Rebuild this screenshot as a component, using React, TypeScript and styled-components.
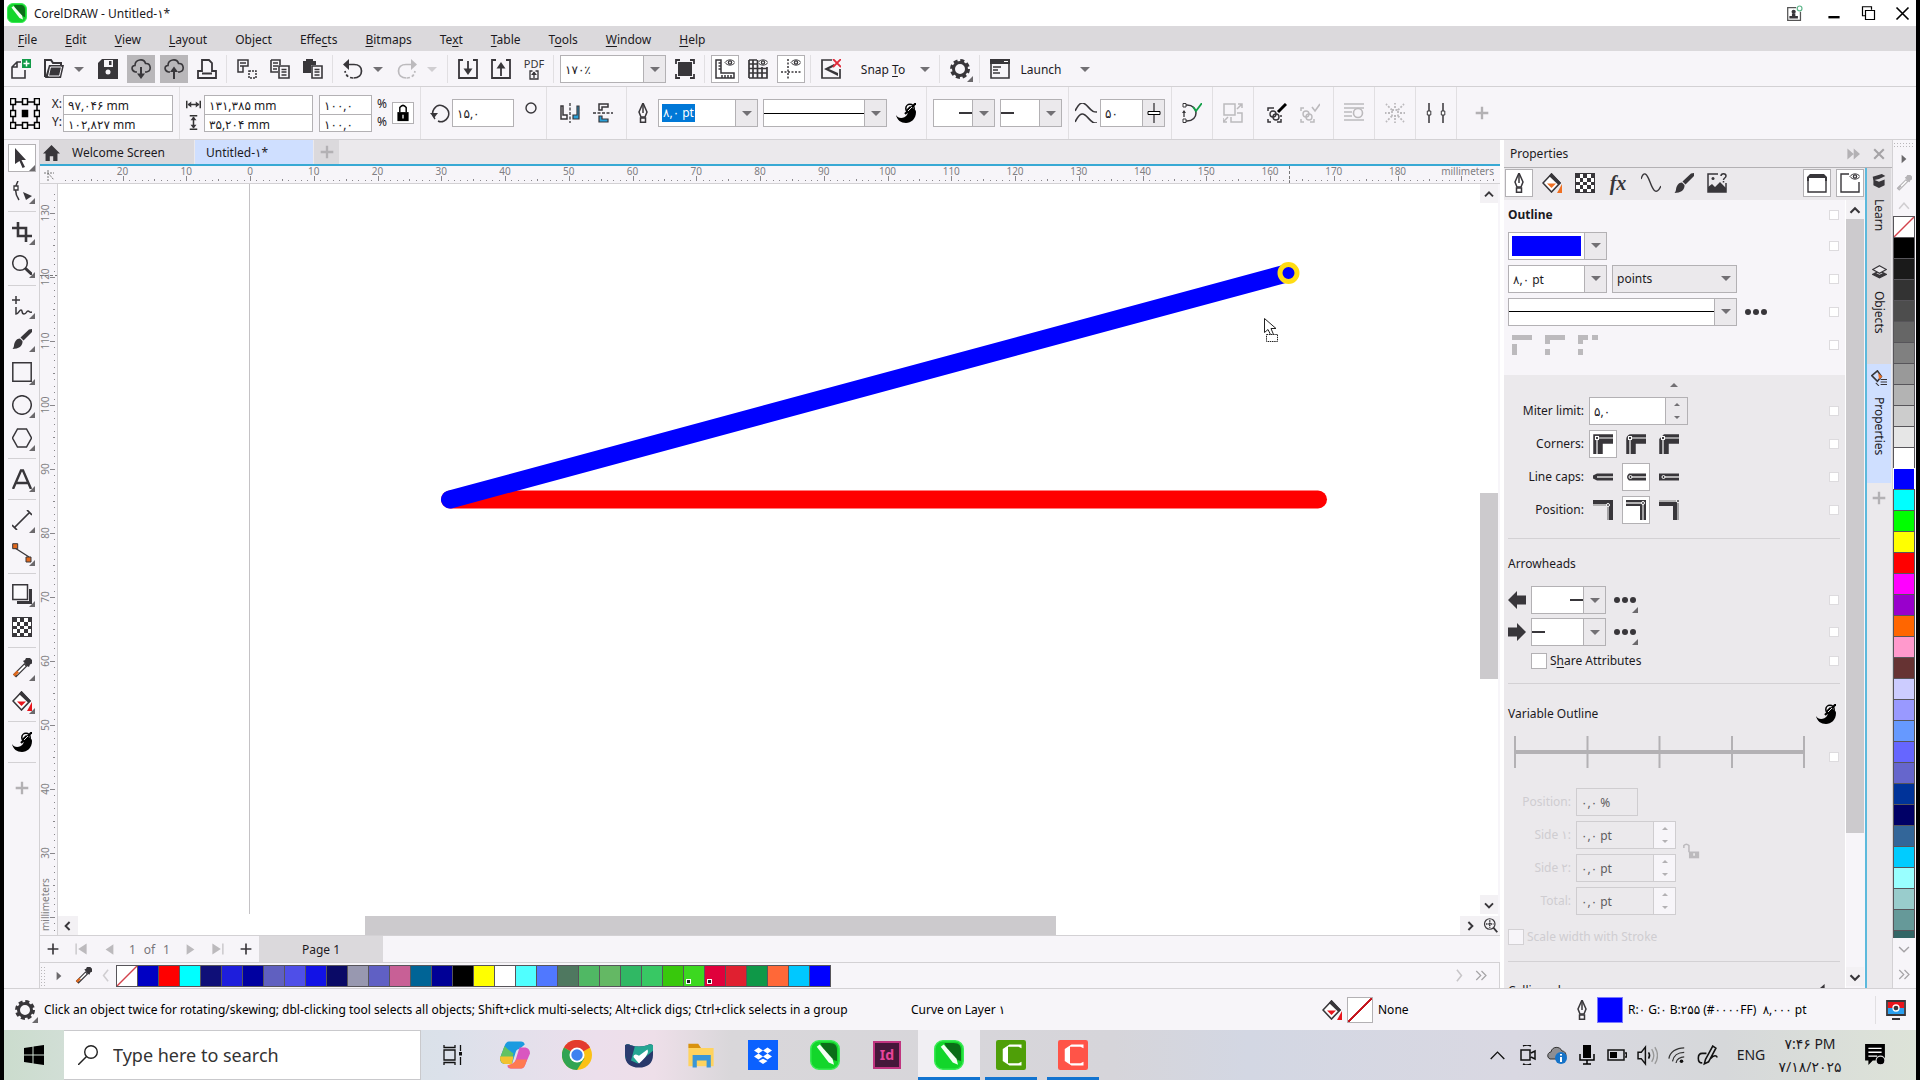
import React from "react";
import styled, { createGlobalStyle, css } from "styled-components";

const INK = "#38363a";
const LINE = "#d3d1d4";
const EDGE = "#b3b1b4";
const BAR = "#f7f5f9";
const PANE = "#ebe9ec";
const DIM = "#dbd9dc";
const ACTIVE = "#cfdfff";
const FADE = "#bcbabd";
const FONT = `"Noto Sans", "DejaVu Sans", sans-serif`;

const Global = createGlobalStyle`
  *, *::before, *::after { box-sizing: border-box; }
  body { margin: 0; background: #000; font: 12px/16px ${FONT}; color: #1c1a1e; }
  button, input, select { font: inherit; color: inherit; margin: 0; border-radius: 0; }
  button { padding: 0; border: 0; background: none; }
  svg { display: block; flex: none; }
`;

/* ---------- icons ---------- */

type Drawing = React.ReactNode;

const swirl = (
  <g>
    <path d="M0 12c2 4 8 4 11 0 1-2 1-4-1-5l4-4c3 3 6 3 6 6 0 7-5 11-10 11S1 17 0 12z" fill="#000" />
    <path d="M9 11 20 0" stroke="#000" strokeWidth="2.2" />
    <circle cx="14" cy="5.5" r="4.2" fill="none" stroke="#000" strokeWidth="1.5" />
    <path d="M12 8l4-4" stroke="#fff" strokeWidth=".9" />
    <path d="M11.500 4.500a3 3 0 0 1 2-1.800" stroke="#fff" strokeWidth=".9" fill="none" />
  </g>
);
const checker = (
  <g>
    <path d="M0 0h20v20H0z" fill={INK} />
    <path
      fill="#fff"
      d="M5 1h3v4H5zM12 1h4v4h-4zM1 5h4v4H1zM8 5h4v4H8zM16 5h3v4h-3zM5 9h3v3H5zM12 9h4v3h-4zM1 12h4v4H1zM8 12h4v4H8zM16 12h3v4h-3zM5 16h3v3H5zM12 16h4v3h-4z"
    />
  </g>
);
const bucket = (drop: string) => (
  <g>
    <path d="M9.5 1 1 10l8.5 9L18 10z" fill="#fff" stroke={INK} strokeWidth="1.6" />
    <path d="M9.5 0 19 10l-2.500 2L7 3z" fill={INK} />
    <path d="M5 10.500h9l-4.500 4.500z" fill={drop} />
    <path d="M20 11v9h-5z" fill={drop} />
  </g>
);
const nib = (
  <g fill="none" stroke={INK} strokeWidth="1.5">
    <path d="M10 0 6 9l2 5h4l2-5z" />
    <path d="M10 2v8" />
    <path d="M7.500 15h5v4.300h-5z" />
  </g>
);
const brush = (
  <path d="M20 0v3L11.500 11.500 8.500 8.500 17 .5zM8 9.500 10.500 12c.5 5-4 8-10 8 2-2 1-4 2.500-7 1-2.500 3-3.500 5-3.500z" fill={INK} />
);
const gear = (
  <g>
    <circle cx="10" cy="10" r="8.300" fill="none" stroke={INK} strokeWidth="3.400" strokeDasharray="3.900 2.619" />
    <circle cx="10" cy="10" r="6.500" fill="none" stroke={INK} strokeWidth="3" />
  </g>
);
const dropper = (stem: string, tip: string) => (
  <g>
    <path d="M14 6.500 2.500 18" stroke={stem} strokeWidth="4.500" />
    <path d="M13 7.500 4 16.500" stroke="#fff" strokeWidth="1.800" />
    <path d="M6 13.500 2 17.500" stroke={tip} strokeWidth="2.600" />
    <path d="M11 3l2-1 1-2h4l2 2v3.500l-2 1-1 2.500-2-1z" fill={stem} />
  </g>
);
const eye = (
  <g transform="translate(10 0)" fill="none" stroke={INK}>
    <path d="M0 3.500C2.500 0 7.500 0 10 3.500 7.500 7 2.500 7 0 3.500z" fill="#fff" />
    <circle cx="5" cy="3.500" r="1.600" strokeWidth="1.400" />
  </g>
);
const corel = (
  <g>
    <rect x=".5" y=".5" width="19" height="19" rx="5.500" fill="#13d62b" stroke="#3aea55" />
    <path d="M7 2h6c4 0 5 2 5 5v7c-5-1-9-6-11-12z" fill="#0b6d18" />
    <path d="M4.500 4.500 6.500 3l8.500 9.500 1 4-3.500-1.500z" fill="#f3fff3" />
  </g>
);
const lineCorner = (kind: "miter" | "round" | "bevel") => (
  <g fill="none" strokeLinejoin={kind}>
    <path d="M5 20V5H20" stroke={INK} strokeWidth="9.500" />
    <path d="M4 20V4H20" stroke="#fff" strokeWidth="1.200" />
    <rect x="2.500" y="2.500" width="3" height="3" fill={INK} stroke="#fff" strokeWidth="1.100" />
  </g>
);
const linePos = (o: number) => (
  <g fill="none">
    <path d="M0 3h17v17" stroke={INK} strokeWidth="6" strokeLinejoin={o > 4 ? "round" : "miter"} />
    <path d={`M0 ${6 - o}h${14 + o}v${14 + o}`} stroke="#ddd" strokeWidth="1.300" />
    <circle cx={14 + o} cy={6 - o} r="1.500" fill={INK} stroke="#fff" />
  </g>
);
const cap = (kind: number) => (
  <g>
    <path
      d={kind === 0 ? "M4 6.500h16v7H4L0 11.500v-3z" : kind === 1 ? "M3 6.500h17v7H3Q-1 10 3 6.500z" : "M0 6.500h20v7H0z"}
      fill={INK}
    />
    <path d="M4 10h16" stroke="#ddd" strokeWidth="1.500" />
    {kind > 0 && <circle cx="4.500" cy="10" r="1.500" fill={INK} stroke="#fff" />}
  </g>
);
const S = (d: string, color = INK, w = 1.6) => <path d={d} fill="none" stroke={color} strokeWidth={w} />;
const F = (d: string, color = INK) => <path d={d} fill={color} />;

const cloud = "M6 13H4.500C0 12 0 6.500 4 6.500 4 0 13-1 14.500 4.500 20 4 21 12 15.500 13H14";

const icons: Record<string, Drawing> = {
  corel,
  newDoc: <>{S("M10 3H6L1 8v11h13v-8M6 3v5H1")}<path d="M11 0h9v9h-9z" fill="#129a48" />{S("M15.500 1.500v6M12.500 4.500h6", "#fff", 1.5)}</>,
  open: <>{S("M1 18V1h6l2 3h8v3", INK, 2)}{F("M5 6h15l-3 13H1z")}{S("M6.500 8h11l-2 9h-11z", "#f7f5f9", 1)}</>,
  save: <>{F("M4 0h16v20H0V4z")}<path d="M6 1h9v7H6z" fill="#f7f5f9" />{F("M11 2h2.500v4H11z")}<circle cx="10" cy="13" r="2.500" fill="#f7f5f9" /></>,
  cloudDown: <>{S(cloud)}{S("M10 8v10", INK, 2)}{F("M6 14.500h8L10 20z")}</>,
  cloudUp: <>{S(cloud)}{S("M10 10v10", INK, 2)}{F("M6 13h8l-4-5.500z")}</>,
  print: <>{S("M5 13V1h7l3 3v9M5 12H1v7h18v-7h-4M5 14.500h10", INK, 1.8)}</>,
  cut: <>{S("M1 1h10v6H6v6H1zM3 4h6M3 7h3", INK, 1.5)}<path d="M12 12h7v7h-7z" fill="none" stroke={INK} strokeWidth="1.500" strokeDasharray="2 1" /></>,
  copy: <>{S("M1 1h9v5M1 1v12h7M3 4h5M3 7h5M3 10h4", INK, 1.6)}{S("M9 7h10v12H9zM11.500 10.500h5M11.500 13h5M11.500 16h5", INK, 1.6)}</>,
  paste: <>{F("M0 2h3V0h7v2h3v4H8v8H0z")}{S("M9 7h10v12H9zM11.500 10.500h5M11.500 13h5M11.500 16h5", INK, 1.6)}</>,
  undo: <>{S("M3 5.500h8c5 0 7.500 3 7.500 6.500S16 19 10.500 19", INK, 1.7)}<path d="M10 19c-4 0-7-2-8-7" fill="none" stroke={INK} strokeWidth="1.700" strokeDasharray="3 2" />{F("M0 5.500 6 0v11z")}</>,
  redo: <>{S("M17 5.500H9c-5 0-7.500 3-7.500 6.500S4 19 9.500 19", FADE, 1.7)}<path d="M10 19c4 0 7-2 8-7" fill="none" stroke={FADE} strokeWidth="1.700" strokeDasharray="3 2" />{F("M20 5.500 14 0v11z", FADE)}</>,
  importDoc: <>{S("M5 1H1v18h18V1h-4M10 2v10", INK, 1.8)}{F("M5.500 9.500h9L10 16z")}</>,
  exportDoc: <>{S("M5 1H1v18h18V1h-4M10 8v9", INK, 1.8)}{F("M5.500 9.500h9L10 3z")}</>,
  pdf: <>{S("M7 2H2v16h16V2h-5M10 4v12", INK, 2.6)}{F("M4 10 10 3l6 7z")}</>,
  full: <>{F("M3 3h14v14H3z")}{S("M1 5V1h4M15 1h4v4M19 15v4h-4M5 19H1v-4", INK, 1.8)}</>,
  rulers: <>{S("M1 1h5v13h13v5H1zM3.500 4H6M3.500 7H6M3.500 10H6M7 19v-3M10 19v-3M13 19v-3M16 19v-3", INK, 1.5)}{eye}</>,
  grid: <>{S("M1 1h8M1 19h18V8M1 1v18M1 5h8M1 9.500h18M1 14h18M5 1v18M9.500 1v18M14 8v11", INK, 1.7)}{eye}</>,
  guides: <><path d="M7 0v20M0 13h20" stroke={INK} strokeWidth="1.500" strokeDasharray="2 1.500" />{eye}</>,
  snapOff: <>{S("M11 1H1v18h18v-9", INK, 1.7)}{F("M3 10 13 5v2.500L8 10l9 4v3z")}{S("M12 0l8 8M20 0l-8 8", "#e02a3a", 1.8)}</>,
  gear,
  launch: <>{S("M1 1h18v18H1z", INK, 1.6)}{F("M0 0h20v5H0z")}{S("M3 8h8M3 11h5M3 14h7", INK, 1.4)}{S("M14 2.500h4", "#fff", 1)}</>,
  mirrorH: <>{S("M1 3h2v9h4v4H1z", INK, 1.5)}<path d="M10 0v20" stroke={INK} strokeWidth="1.300" strokeDasharray="3 1.500" /><path d="M19 3h-2v9h-4v4h6z" fill="#2aa0d8" stroke={INK} strokeWidth="1.200" /></>,
  mirrorV: <>{S("M6 1h9v3H9v3H6z", INK, 1.5)}<path d="M0 10h20" stroke={INK} strokeWidth="1.300" strokeDasharray="3 1.500" /><path d="M6 19h9v-3H9v-3H6z" fill="#2aa0d8" stroke={INK} strokeWidth="1.200" /></>,
  nib,
  swirl,
  smooth: <>{S("M0 8C5-3 8-1 12 4s5 5 8 5M0 19C5 8 8 10 12 15s5 5 8 5", INK, 1.6)}</>,
  slider: <>{S("M10 0v20", INK, 1.3)}<path d="M4 8.500h12v3H4z" fill="#fff" stroke="#000" /></>,
  close: <>{S("M3 2h2c12 0 12 16 0 16H3", INK, 1.5)}<path d="M1 .5h3v3.500H1zM1 16h3v3.500H1z" fill="#fff" stroke={INK} />{S("M2 8v6", INK, 1.3)}{F("M0 10l2-3 2 3z")}{S("M11 4l3 4 6-8", "#12a048", 1.8)}</>,
  order: <>{S("M1 1h11v11H1zM8 14v5h11v-9h-5M14 6l5-5M15 1h4v4M5 14l-5 5M0 15v4h4", FADE, 1.5)}</>,
  bound: <>{S("M1 8V5h3M1 16v3h3M10 19h4v-3", INK, 1.5)}<circle cx="6" cy="11" r="3" fill="none" stroke={INK} strokeWidth="1.400" /><circle cx="9" cy="14" r="3" fill="none" stroke={INK} strokeWidth="1.400" />{S("M11 9 19 1", "#000", 3)}{S("M4 5h3M14 12v2", INK, 1.5)}</>,
  boundOff: <>{S("M1 8V5h3M1 16v3h3M10 19h4v-3", FADE, 1.5)}<circle cx="6" cy="11" r="3" fill="none" stroke={FADE} strokeWidth="1.400" /><circle cx="9" cy="14" r="3" fill="none" stroke={FADE} strokeWidth="1.400" />{S("M12 4l3 4 5-7", FADE, 1.6)}</>,
  wrap: <>{S("M0 1h20M0 5h20M0 9h8M0 13h8M0 17h20", FADE, 1.6)}<circle cx="14" cy="10" r="4.500" fill="#f7f5f9" stroke={FADE} strokeWidth="1.600" /></>,
  burst: <path d="M7 7 1 1M13 7l6-6M7 13l-6 6M13 13l6 6M5 10H0M15 10h5M10 5V0M10 15v5M7 7h6v6H7z" stroke={FADE} strokeWidth="1.800" strokeDasharray="2 1.500" fill="none" />,
  align: <>{S("M3 0v20M17 0v20", INK, 1.5)}<path d="M1.300 8h3.500v4H1.300zM15.300 8h3.500v4h-3.500z" fill="#fff" stroke={INK} /></>,
  plus: S("M10 3v14M3 10h14", "#b3b1b4", 2.6),
  plusSmall: S("M10 4v12M4 10h12", INK, 1.8),
  pick: F("M3 0l11 12H9.500l3.500 7-2.500 1-3-7L3 16z"),
  shape: <>{S("M6 0C2 7 3 13 7 19", INK, 1.5)}<path d="M2 5h4v4H2z" fill="#fff" stroke={INK} strokeWidth="1.300" />{F("M11 11l9 4-6 4z")}</>,
  crop: S("M6 0v14h14M0 6h14v14", INK, 2.6),
  zoom: <><circle cx="8" cy="8" r="7.300" fill="none" stroke={INK} strokeWidth="1.500" />{S("M13 13l7 6.500", INK, 3)}</>,
  freehand: S("M0 4h8M4 0v8M4 11v7c3 0 3-4 5-4s0 4 3 4 2-3 4-3 1 2 4 1", INK, 1.5),
  brush,
  rect: S("M.8.8h18.400v18.400H.8z", INK, 1.5),
  ellipse: <circle cx="10" cy="10" r="9.300" fill="none" stroke={INK} strokeWidth="1.500" />,
  polygon: S("M5.500 1h9L19.500 10l-5 9h-9L.5 10z", INK, 1.5),
  text: <>{S("M1 20 9 1.500h2L19 20M4 14h12", INK, 2.4)}</>,
  dimension: S("M3 17 17 3M0 15l5 5M15 0l5 5", INK, 1.7),
  connector: <>{S("M3 5l14 9", INK, 1.4)}<path d="M.7.7h5v5h-5zM14 14h5v5h-5z" fill="#e0681c" stroke={INK} /></>,
  shadow: <>{F("M17 5h3v15H5v-3h12z")}<path d="M.8.8h14.700v14.700H.8z" fill="#fbfafc" stroke={INK} strokeWidth="1.500" /></>,
  checker,
  dropper: dropper(INK, "#e0681c"),
  dropperOff: dropper("#b5b3b6", "#b5b3b6"),
  fill: bucket("#e8141c"),
  fillOrange: bucket("#f07023"),
  home: F("M10 0 0 10.500h3V20h5v-6h4v6h5v-9.500h3z"),
  wave: S("M0 6C3-3 6 1 9 9s6 14 11 4", INK, 1.4),
  picture: <>{S("M11 1H1v18h18V10", INK, 1.5)}{F("M1 19v-5l4-3 3 3 5-5 6 6v4z")}<circle cx="6" cy="5.500" r="1.500" fill={INK} />{S("M14 3c0-3 5-3 5 0 0 2-2.500 2-2.500 4M16.500 8v1.500", INK, 1.5)}</>,
  tabTop: <>{S("M1 5v14h18V5", INK, 1.4)}{F("M0 4l3-3h14l3 3v4h-2V5H2v3H0z")}</>,
  tabEye: <>{S("M9 1H1v18h18V9", INK, 1.4)}{eye}</>,
  learn: <>{F("M2 8l8 3 8-3v8l-8 4-8-4z")}{F("M1 4 14 0l5 3-9 4-8 2z")}</>,
  layers: <>{S("M10 8l9 4.500-9 4.500-9-4.500z", INK, 1.5)}{F("M4 10l6 3 6-3 2 3-8 4-8-4z")}<path d="M10 1l9 5-9 5-9-5z" fill="#ebe9ec" stroke={INK} strokeWidth="1.500" /></>,
  props: <>{S("M8 1 1 7l7 7 5-6z", INK, 2)}{F("M9 4l5 4-4 4z", "#f07023")}{S("M12 12h8M12 15h8M12 18h8M6 16l4 4", INK, 1.3)}</>,
  lock: <><rect x="3" y="9" width="14" height="10" fill="#000" />{S("M6 9V4q4-5 8 0v5", "#000", 1.8)}{S("M10 12v4", "#fff", 1.6)}</>,
  unlock: <><rect x="7" y="10" width="12" height="8" fill={FADE} />{S("M1 6V3q3-3 6 0v8", FADE, 1.8)}{S("M13 12v3", "#fff", 1.4)}</>,
  rotate: <>{S("M5 16C-1 9 6 0 13 3s8 11 1 15c-2 1-4 1-6 0", INK, 1.5)}{F("M0 10h8l-4 5z")}</>,
  widthIcon: <>{S("M1 5v10M19 5v10M3 10h14", "#333", 2)}{F("M2 10l5-4v8zM18 10l-5-4v8z")}</>,
  heightIcon: <>{S("M5 1h10M5 19h10M10 3v14", "#333", 2)}{F("M10 2l4 5H6zM10 18l4-5H6z")}</>,
  arrowL: F("M0 10 10 0v5h10v10H10v5z"),
  arrowR: F("M20 10 10 0v5H0v10h10v5z"),
  dash1: <>{F("M0 0h20v5H0zM0 9h5v11H0z", FADE)}</>,
  dash2: <>{F("M0 0h20v5H5v4H0zM0 14h5v6H0z", FADE)}</>,
  dash3: <>{F("M0 0h10v5H5v4H0zM14 0h6v5h-6zM0 14h5v6H0z", FADE)}</>,
  miter: lineCorner("miter"),
  round: lineCorner("round"),
  bevel: lineCorner("bevel"),
  cap0: cap(0),
  cap1: cap(1),
  cap2: cap(2),
  pos0: linePos(1),
  pos1: linePos(3),
  pos2: linePos(5),
  user: <>{S("M12 3H2v15h15V8", "#555", 1.5)}<circle cx="9" cy="8" r="2.500" fill={INK} />{F("M7 10h4v3h3v3H4v-3h3z")}<circle cx="16" cy="4" r="2.800" fill="none" stroke="#5fb68b" strokeWidth="1.400" /></>,
  min: S("M2 16h16", "#000", 3.4),
  restore: S("M6 13H2V1h12v4M6 6h12v12H6z", "#000", 1.6),
  x: S("M2 2l16 16M18 2 2 18", "#000", 2.2),
  xGray: S("M4 4l12 12M16 4 4 16", "#a5a3a6", 2.6),
  dbl: F("M2 2l9 8-9 8zM11 2l9 8-9 8z", "#b3b1b4"),
  chevUp: S("M5 13l5-5 5 5", INK, 2.4),
  chevDown: S("M5 8l5 5 5-5", INK, 2.4),
  chevLeft: S("M12 5l-5 5 5 5", INK, 2.4),
  chevRight: S("M8 5l5 5-5 5", INK, 2.4),
  chevUpG: S("M3 14l7-8 7 8", "#d0ced1", 2.2),
  chevDownG: S("M3 7l7 7 7-7", "#a5a3a6", 2),
  chevLeftG: S("M14 1 7 10l7 9", "#d0ced1", 2.4),
  chevRightG: S("M6 1l7 9-7 9", "#c8c6c9", 2.4),
  dblChev: S("M3 4l6 6-6 6M10 4l6 6-6 6", "#a5a3a6", 1.6),
  tri: F("M6 3l8 7-8 7z", "#6b696c"),
  first: <>{F("M18 2v16L6 10z", FADE)}{S("M3 2v16", FADE, 1.6)}</>,
  prev: F("M16 2v16L4 10z", FADE),
  next: F("M4 2v16l12-8z", FADE),
  last: <>{F("M2 2v16l12-8z", FADE)}{S("M17 2v16", FADE, 1.6)}</>,
  zoomPan: <><circle cx="9" cy="8" r="7" fill="none" stroke={INK} strokeWidth="1.600" />{S("M14 13l5 6", INK, 2.6)}<path d="M9 3v10M4 8h10" stroke={INK} strokeWidth="2" strokeDasharray="2 1" /></>,
  undoSmall: <>{S("M4 7h6c5 0 8 4 8 10", INK, 2.4)}{F("M0 7l8-7v14z")}</>,
  monitor: <>{S("M1 1h18v14H1zM6 19h8", INK, 1.8)}<path d="M2 2h16v6H2z" fill="#e8141c" /><path d="M2 8h16v6H2z" fill="#2aa0f0" /><circle cx="10" cy="8" r="3" fill={INK} stroke="#fff" strokeWidth="1.300" /></>,
  windows: F("M0 3l8.500-1.200v7.700H0zM9.500 1.600 20 0v9.500H9.500zM0 10.500h8.500v7.700L0 17zM9.500 10.500H20V20L9.500 18.400z", "#000"),
  search: <><circle cx="13" cy="7" r="6.300" fill="none" stroke="#222" strokeWidth="1.400" />{S("M8.500 11.500 0 20", "#222", 1.500)}</>,
  task: <>{S("M1 5h11v10H1zM1 0v2.500h11V0M1 20v-2.500h11V20M17.500 0v6M17.500 12v8", "#111", 1.300)}{F("M16 7h3v3.500h-3z", "#111")}</>,
  copilot: (
    <g>
      <path d="M6 1h8q2 0 2.500 2L13 6q-2 0-2.500 2L8 16H3q-3-.5-3-4L3 4q1-3 3-3z" fill="#1b9be0" />
      <path d="M0 12 3 4q4 4 6 5l-2 7H3q-3-.5-3-4z" fill="#62c262" />
      <path d="M0 11h9l-1 5H3q-3-.5-3-5z" fill="#f2c230" />
      <path d="M14 19H7q-2 0-2-2l3-1q2-1 2.500-3L13 5h4q3 .5 3 4l-3 7q-1 3-3 3z" fill="#d957c0" />
      <path d="M14 19H7l-2-2 3-1q2-1 3-3h7l-1 3q-1 3-3 3z" fill="#ff7a50" />
    </g>
  ),
  chrome: (
    <g>
      <circle cx="10" cy="10" r="10" fill="#fbc116" />
      <path d="M10 10 1.300 5A10 10 0 0 1 18.700 5z" fill="#e33b2e" />
      <path d="M10 10 1.300 5A10 10 0 0 0 10 20l5-8z" fill="#30a452" />
      <circle cx="10" cy="10" r="5" fill="#fff" />
      <circle cx="10" cy="10" r="3.800" fill="#3e82f0" />
    </g>
  ),
  shield: (
    <g>
      <path d="M0 3q2-1.500 4 0 6 2 12 0 2-1.500 4 0v7c0 6-4 9-10 9S0 16 0 10z" fill="#28396b" />
      <path d="M0 3q2-1.500 4 0 6 2 12 0 2-1.500 4 0v4L9 16 0 12z" fill="#25a693" />
      <path d="M0 3q2-1.500 4 0l3 1-3 11Q0 13 0 10z" fill="#2b3d70" />
      <path d="M10 16 6 11.500q0-3 4-1l6-4.500q2 3-6 10z" fill="#fff" />
    </g>
  ),
  folder: (
    <g>
      <path d="M1 2h7l2 3H1z" fill="#d9920e" />
      <path d="M1 5h18v13H1z" fill="#ffd35e" />
      <path d="M4 10h13v9h-3v-5H7v5H4z" fill="#3b96d6" />
    </g>
  ),
  dropbox: (
    <g>
      <path d="M0 0h20v20H0z" fill="#0b61ff" />
      <path d="M7 5l3 2-3 2-3-2zM13 5l3 2-3 2-3-2zM7 9l3 2-3 2-3-2zM13 9l3 2-3 2-3-2zM10 12.500l3 1.500-3 2-3-2z" fill="#fff" />
    </g>
  ),
  camGreen: (
    <g>
      <rect width="20" height="20" rx="1.500" fill="#4f9f08" />
      <path d="M17 5.500V3H9L4.500 6v8L9 17h8v-2.500l-2 1H8v-11h7z" fill="#fff" />
    </g>
  ),
  camRed: (
    <g>
      <rect width="20" height="20" rx="1.500" fill="#ff5448" />
      <path d="M17 5.500V3H9L4.500 6v8L9 17h8v-2.500l-2 1H8v-11h7z" fill="#fff" />
    </g>
  ),
  caret: S("M2 14l8-8 8 8", "#111", 1.600),
  cam: <>{S("M6 1q4-2 8 0M6 19q4 2 8 0M4 5h9v10H4zM14 8l4-2v8l-4-2", "#111", 1.500)}</>,
  cloudInfo: <><path d="M3 14C-1 12 1 7 4 7c1-6 9-6 11-1 4 0 5 5 3 8z" fill="#8e8e92" stroke="#333" /><circle cx="14" cy="13" r="6" fill="#1673c8" />{S("M14 9v1.500M14 12v5", "#fff", 2)}</>,
  mic: <>{F("M6 0h8v13H6z", "#000")}{S("M3 9v6h14V9M10 15v4M6 19h8", "#000", 1.500)}</>,
  battery: <>{S("M1 5h16v10H1zM18 8h1.500v4H18", "#111", 1.500)}{F("M3 7h7v6H3z", "#000")}</>,
  sound: <>{S("M1 7h3l4-5v16l-4-5H1z", "#111", 1.400)}{S("M11 7q2 3 0 6", "#111", 1.400)}{S("M14 4q4 6 0 12M17 2q5 8 0 16", "#999", 1.300)}</>,
  wifi: <>{S("M1 14C2 7 9 2 18 2M5 17C6 11 11 7 18 7M9 19c0-4 5-7 9-7", "#333", 1.400)}<circle cx="15" cy="17" r="2" fill="#111" /></>,
  pen: <>{S("M8 14 15 1l3 2-7 13-4 2zM9 8H5C0 8 0 17 5 17M13 13c3-4 6-3 6-1", "#111", 1.500)}</>,
  note: <>{F("M1 0h18v15H8l-4 4v-4H1z", "#000")}{S("M4 4h12M4 7.500h12M4 11h8", "#fff", 1.200)}<circle cx="15" cy="15" r="4" fill="#000" stroke="#ddd" /></>,
};

const Svg = ({ n, s = 20, w, h }: { n: string; s?: number; w?: number; h?: number }) => (
  <svg width={w ?? s} height={h ?? s} viewBox="0 0 20 20" preserveAspectRatio="none" aria-hidden="true">
    {icons[n]}
  </svg>
);

/* ---------- shared parts ---------- */

const flyout = css<{ $fly?: boolean }>`
  ${(p) =>
    p.$fly &&
    css`
      &::after {
        content: "";
        position: absolute;
        right: 1px;
        bottom: 1px;
        border: 3px solid transparent;
        border-right-color: #6b696c;
        border-bottom-color: #6b696c;
      }
    `}
`;

const ToolButton = styled.button<{ $state?: "on" | "hot"; $fly?: boolean }>`
  position: relative;
  flex: none;
  width: 28px;
  height: 28px;
  display: grid;
  place-items: center;
  ${(p) => p.$state === "on" && css`background: #fff; box-shadow: inset 0 0 0 1px ${EDGE};`}
  ${(p) => p.$state === "hot" && css`background: #b9b7ba;`}
  ${flyout}
`;

const DropArrow = styled.button<{ $w?: number; $off?: boolean; $box?: boolean }>`
  flex: none;
  width: ${(p) => p.$w ?? 21}px;
  height: ${(p) => (p.$box ? "auto" : "28px")};
  display: grid;
  place-items: center;
  ${(p) => p.$box && css`background: ${PANE}; border-left: 1px solid ${EDGE};`}
  &::before {
    content: "";
    border: 5px solid transparent;
    border-bottom: 0;
    border-top-color: ${(p) => (p.$off ? "#d0ced1" : "#727074")};
  }
`;

const Field = styled.span<{ $w: number; $h?: number; $off?: boolean }>`
  flex: none;
  width: ${(p) => p.$w}px;
  height: ${(p) => p.$h ?? 28}px;
  display: flex;
  align-items: stretch;
  border: 1px solid ${(p) => (p.$off ? "#cfcdd0" : EDGE)};
  background: ${(p) => (p.$off ? PANE : "#fff")};
  color: ${(p) => (p.$off ? "#5f5d61" : "inherit")};
`;

const Entry = styled.input`
  flex: 1;
  min-width: 0;
  width: 100%;
  border: 0;
  padding: 2px 4px 0;
  background: none;
  outline: 0;
`;

const LineSample = styled.button<{ $at?: "start" | "end" }>`
  flex: 1;
  display: flex;
  align-items: center;
  justify-content: ${(p) => (p.$at === "end" ? "flex-end" : "flex-start")};
  &::before {
    content: "";
    height: ${(p) => (p.$at ? 2 : 1)}px;
    width: ${(p) => (p.$at ? "13px" : "100%")};
    background: ${(p) => (p.$at ? INK : "#000")};
  }
`;

const Spin = styled.span<{ $off?: boolean }>`
  flex: none;
  width: 22px;
  display: flex;
  flex-direction: column;
  justify-content: space-around;
  align-items: center;
  border-left: 1px solid ${(p) => (p.$off ? "#cfcdd0" : EDGE)};
  background: ${(p) => (p.$off ? BAR : PANE)};
`;
const SpinArrow = styled.button<{ $up?: boolean; $off?: boolean }>`
  width: 0;
  height: 0;
  border: 3px solid transparent;
  border-${(p) => (p.$up ? "top" : "bottom")}: 0;
  border-${(p) => (p.$up ? "bottom" : "top")}-color: ${(p) => (p.$off ? "#b3b1b4" : "#727074")};
`;
const Spinner = ({ off }: { off?: boolean }) => (
  <Spin $off={off}>
    <SpinArrow $up $off={off} aria-label="Increase" />
    <SpinArrow $off={off} aria-label="Decrease" />
  </Spin>
);

const U = styled.u`
  text-underline-offset: 2px;
`;
const Push = styled.span`
  flex: 1;
`;

/* ---------- frame ---------- */

const Window = styled.div`
  height: 100vh;
  min-height: 900px;
  display: flex;
  flex-direction: column;
  border: solid #000;
  border-width: 0 4px;
  background: ${BAR};
  overflow: hidden;
`;

const TitleBar = styled.header`
  flex: none;
  height: 26px;
  display: flex;
  align-items: center;
  gap: 7px;
  padding-left: 3px;
  background: #fff;
`;
const Title = styled.h1`
  flex: 1;
  margin: 0;
  padding-top: 1px;
  font-size: 12px;
  font-weight: 400;
`;
const Caption = styled.div`
  display: flex;
  gap: 6px;
  & > :first-child {
    margin-right: 6px;
  }
`;
const CaptionButton = styled.button`
  width: 28px;
  height: 24px;
  display: grid;
  place-items: center;
`;

const MenuBar = styled.nav`
  flex: none;
  height: 25px;
  display: flex;
  align-items: center;
  gap: 28px;
  padding: 2px 0 0 14px;
  background: ${DIM};
`;

const Toolbar = styled.div`
  flex: none;
  height: 36px;
  display: flex;
  align-items: center;
  gap: 5px;
  padding: 1px 0 0 3px;
  border-bottom: 1px solid ${LINE};
`;
const Divider = styled.span`
  flex: none;
  width: 1px;
  height: 28px;
  margin-right: 1px;
  background: #e1dfe2;
`;
const Split = styled.div`
  display: flex;
`;
const Words = styled.button<{ $w: number }>`
  width: ${(p) => p.$w}px;
  height: 28px;
  padding-top: 1px;
  white-space: nowrap;
`;
const PdfIcon = styled.span`
  display: grid;
  justify-items: center;
  font-size: 11px;
  line-height: 12px;
  color: ${INK};
`;

const PropertyBar = styled.div`
  flex: none;
  height: 53px;
  display: flex;
  border-bottom: 1px solid ${LINE};
`;
const Group = styled.div<{ $pad?: number; $gap?: number }>`
  display: flex;
  align-items: center;
  gap: ${(p) => p.$gap ?? 5}px;
  padding: 0 ${(p) => p.$pad ?? 6}px;
  border-right: 1px solid #e1dfe2;
`;
const Stack = styled.div<{ $w: number; $end?: boolean }>`
  width: ${(p) => p.$w}px;
  padding-right: 1px;
  display: grid;
  grid-template-rows: 18px 18px;
  align-items: center;
  justify-items: ${(p) => (p.$end ? "end" : "start")};
`;
const StackField = styled.div<{ $w: number }>`
  width: ${(p) => p.$w}px;
  height: 37px;
  display: grid;
  grid-template-rows: 1fr 1fr;
  border: 1px solid ${EDGE};
  background: #fff;
  & > input + input {
    border-top: 1px solid ${EDGE};
  }
`;
const LockButton = styled.button`
  width: 22px;
  height: 22px;
  margin-left: 4px;
  display: grid;
  place-items: center;
  background: #fff;
  border: 1px solid ${EDGE};
`;
const Mark = styled.mark`
  align-self: center;
  margin-left: 3px;
  padding: 1px;
  background: #0078d7;
  color: #fff;
`;
const SliderButton = styled.button`
  flex: none;
  width: 22px;
  display: grid;
  place-items: center;
  border-left: 1px solid ${EDGE};
  background: ${PANE};
`;
const AddCell = styled.div`
  width: 49px;
  display: grid;
  place-items: center;
`;

/* ---------- work area ---------- */

const Body = styled.div`
  flex: 1;
  min-height: 0;
  display: flex;
`;
const ToolBox = styled.nav`
  flex: none;
  width: 36px;
  display: flex;
  flex-direction: column;
  align-items: center;
  gap: 5px;
  padding-top: 4px;
  border-right: 1px solid ${LINE};
  & > :last-child {
    margin-top: 5px;
  }
`;
const ToolRule = styled.span`
  width: 28px;
  height: 1px;
  margin: 1px 0;
  background: ${LINE};
`;
const Center = styled.main`
  flex: 1;
  min-width: 0;
  display: flex;
  flex-direction: column;
`;
const Tabs = styled.div`
  flex: none;
  height: 26px;
  display: flex;
  background: ${PANE};
  border-bottom: 2px solid #38a9d4;
`;
const Tab = styled.button<{ $w: number; $on?: boolean }>`
  width: ${(p) => p.$w}px;
  display: flex;
  align-items: center;
  gap: 12px;
  padding: 2px ${(p) => (p.$on ? 11 : 3)}px 0;
  margin-right: 1px;
  background: ${(p) => (p.$on ? ACTIVE : DIM)};
`;
const AddTab = styled(ToolButton)`
  width: 25px;
  height: 24px;
  background: ${DIM};
`;
const RulerRow = styled.div`
  flex: none;
  height: 18px;
  position: relative;
  overflow-x: clip;
  border-bottom: 1px solid ${LINE};
`;
const RulerSvg = styled.svg`
  position: absolute;
  width: 100%;
  height: 100%;
  overflow: visible;
  font: 10px ${FONT};
  fill: #807e82;
`;
const Stage = styled.div`
  flex: 1;
  min-height: 0;
  display: grid;
  grid-template: 1fr 19px / 18px 1fr 18px;
  padding-right: 2px;
`;
const SideRuler = styled.div`
  grid-row: 1 / 3;
  position: relative;
  overflow-y: clip;
  border-right: 1px solid ${LINE};
`;
const Canvas = styled.div`
  position: relative;
  background: #fff;
  overflow: hidden;
`;
const Artwork = styled.svg`
  position: absolute;
  inset: 0;
  width: 100%;
  height: 100%;
`;
const ScrollY = styled.div`
  display: flex;
  flex-direction: column;
  padding-bottom: 2px;
  background: #fff;
`;
const ScrollX = styled.div`
  display: flex;
  background: #fff;
`;
const ScrollEnd = styled.button`
  flex: none;
  width: 20px;
  height: 19px;
  display: grid;
  place-items: center;
  background: #f3f1f4;
  ${ScrollY} & {
    width: auto;
  }
`;
const Thumb = styled.span<{ $before: number; $size: number; $after: number }>`
  flex: 1;
  display: flex;
  flex-direction: inherit;
  &::before {
    content: "";
    flex: ${(p) => p.$before} 0 0;
  }
  &::after {
    content: "";
    flex: ${(p) => p.$after} 0 0;
  }
  & > i {
    flex: ${(p) => p.$size} 0 0;
    background: #cccacd;
  }
`;
const PageBar = styled.div`
  flex: none;
  height: 28px;
  display: flex;
  align-items: center;
  padding-left: 3px;
  gap: 8px;
  border-top: 1px solid ${LINE};
  border-bottom: 1px solid ${LINE};
`;
const NavButton = styled.button`
  width: 20px;
  height: 26px;
  display: grid;
  place-items: center;
`;
const PageCount = styled.span`
  width: 45px;
  padding-top: 1px;
  display: flex;
  justify-content: space-between;
  padding-inline: 2px;
  color: #77757a;
`;
const PageTab = styled.button`
  width: 124px;
  height: 26px;
  margin-left: -5px;
  padding-top: 1px;
  background: ${DIM};
`;
const DocPalette = styled.div`
  flex: none;
  height: 25px;
  display: flex;
  align-items: center;
  padding-right: 6px;
  border-right: 1px solid ${LINE};
`;
const Grip = styled.span<{ $w: number; $h: number }>`
  width: ${(p) => p.$w}px;
  height: ${(p) => p.$h}px;
  background: radial-gradient(circle, #b9b7ba 1px, transparent 1px) 0 0 / 3px 3px;
`;
const Slot = styled.button<{ $w: number; $h?: number }>`
  flex: none;
  width: ${(p) => p.$w}px;
  height: ${(p) => p.$h ?? 22}px;
  display: grid;
  place-items: center;
`;
const Swatches = styled.div`
  flex: 1;
  display: flex;
  & > * + * {
    margin-left: -1px;
  }
`;
const Swatch = styled.button<{ $c: string; $dot?: boolean; $on?: boolean }>`
  position: relative;
  flex: none;
  width: 22px;
  height: 22px;
  border: 1px solid ${(p) => (p.$on ? "#fff" : "#57555a")};
  background: ${(p) =>
    p.$c === "none" ? "linear-gradient(to bottom right, #fff 47%, #d2434c 48%, #d2434c 52%, #fff 53%)" : p.$c};
  ${(p) =>
    p.$dot &&
    css`
      &::after {
        content: "";
        position: absolute;
        left: 2px;
        bottom: 2px;
        width: 5px;
        height: 5px;
        border: 1px solid #fff;
        background: #222;
      }
    `}
`;

/* ---------- docker ---------- */

const Docker = styled.aside`
  flex: none;
  width: 365px;
  display: flex;
  flex-direction: column;
  border-left: 4px solid #fff;
  background: ${PANE};
`;
const DockHead = styled.header`
  flex: none;
  height: 28px;
  display: flex;
  align-items: center;
  gap: 5px;
  padding: 1px 2px 0 6px;
  border-bottom: 1px solid ${EDGE};
`;
const DockTitle = styled.h2`
  flex: 1;
  margin: 0;
  font-size: 12px;
  font-weight: 400;
`;
const DockTools = styled.div`
  flex: none;
  height: 32px;
  display: flex;
  align-items: center;
  gap: 5px;
  padding: 0 1px 2px;
`;
const Fx = styled.i`
  font: italic 700 20px "Liberation Serif", serif;
  color: ${INK};
`;
const DockMain = styled.div`
  flex: 1;
  min-height: 0;
  display: flex;
`;
const DockBody = styled.div`
  flex: 1;
  overflow: hidden;
`;
const Section = styled.section<{ $light?: boolean }>`
  padding: 0 5px 0 4px;
  background: ${(p) => (p.$light ? BAR : PANE)};
`;
const Rule = styled.hr`
  margin: 0;
  border: 0;
  border-top: 1px solid ${LINE};
`;
const Line = styled.div<{ $h?: number }>`
  height: ${(p) => p.$h ?? 33}px;
  display: flex;
  align-items: center;
  gap: 5px;
`;
const H3 = styled.h3<{ $b?: boolean }>`
  margin: 0;
  flex: 1;
  font-size: 12px;
  font-weight: ${(p) => (p.$b ? 700 : 400)};
`;
const Lock = styled.input.attrs({ type: "checkbox" })`
  appearance: none;
  flex: none;
  width: 10px;
  height: 10px;
  margin: 0 1px 0 auto;
  background: #fff;
  border: 1px solid #dddbde;
`;
const Tick = styled.input.attrs({ type: "checkbox" })`
  appearance: none;
  width: 16px;
  height: 16px;
  background: #fff;
  border: 1px solid ${EDGE};
  &:disabled {
    background: ${BAR};
    border-color: #d3d1d4;
  }
`;
const RowLabel = styled.label<{ $w: number; $off?: boolean }>`
  width: ${(p) => p.$w}px;
  text-align: right;
  color: ${(p) => (p.$off ? "#cfcdd1" : "inherit")};
`;
const CheckLabel = styled.label<{ $off?: boolean }>`
  display: flex;
  align-items: center;
  gap: 3px;
  color: ${(p) => (p.$off ? "#cfcdd1" : "inherit")};
`;
const ColorWell = styled.button`
  flex: 1;
  margin: 3px;
  background: #00f;
`;
const UnitSelect = styled.select`
  appearance: none;
  flex: 1;
  min-width: 0;
  padding: 1px 4px 0;
  border: 0;
  background: ${PANE};
`;
const UnitArrow = styled.span`
  width: 20px;
  display: grid;
  place-items: center;
  background: ${PANE};
  &::before {
    content: "";
    border: 5px solid transparent;
    border-bottom: 0;
    border-top-color: #727074;
  }
`;
const Dots = styled.button<{ $fly?: boolean }>`
  position: relative;
  width: 28px;
  height: 28px;
  display: flex;
  align-items: center;
  justify-content: center;
  gap: 2px;
  & > i {
    width: 6px;
    height: 6px;
    border-radius: 50%;
    background: ${INK};
  }
  ${flyout}
`;
const Collapse = styled.button`
  display: block;
  width: 100%;
  height: 16px;
  padding: 4px 0 0 162px;
  &::before {
    content: "";
    display: block;
    width: 0;
    border: 4px solid transparent;
    border-top: 0;
    border-bottom-color: #727074;
  }
`;
const Indent = styled.div`
  padding-left: 23px;
`;
const Inset = styled.div`
  padding: 0 0 10px 6px;
`;
const SideGrid = styled.div`
  display: flex;
  align-items: center;
  gap: 7px;
`;
const DockScroll = styled(ScrollY)`
  flex: none;
  width: 20px;
  padding-right: 1px;
  border-left: 1px solid #fff;
  background: ${BAR};
`;
const DockSide = styled.div`
  flex: none;
  display: flex;
  flex-direction: column;
  background: ${PANE};
`;
const DockClose = styled.button`
  height: 28px;
  display: grid;
  place-items: center;
  border-bottom: 1px solid ${EDGE};
`;
const DockTabs = styled.nav`
  flex: 1;
  width: 27px;
  border-left: 2px solid #5cb9dc;
`;
const DockTab = styled.button<{ $h: number; $on?: boolean }>`
  width: 24px;
  height: ${(p) => p.$h}px;
  display: flex;
  flex-direction: column;
  align-items: center;
  gap: 11px;
  padding-top: 6px;
  background: ${(p) => (p.$on ? ACTIVE : DIM)};
  & > span {
    writing-mode: vertical-rl;
    line-height: 20px;
  }
`;
const SidePalette = styled.aside`
  flex: none;
  width: 24px;
  display: flex;
  flex-direction: column;
  align-items: flex-start;
  padding-top: 2px;
  border-left: 1px solid ${LINE};
`;
const SideSwatches = styled.div`
  flex: 1;
  min-height: 0;
  display: flex;
  flex-direction: column;
  overflow: hidden;
  & > * + * {
    margin-top: -1px;
  }
`;

/* ---------- status and taskbar ---------- */

const Status = styled.footer`
  flex: none;
  height: 42px;
  display: flex;
  align-items: center;
  padding: 0 10px 0 7px;
  border-top: 1px solid ${LINE};
  color: #000;
  white-space: pre;
`;
const StatusCell = styled.div<{ $w: number }>`
  flex: none;
  width: ${(p) => p.$w}px;
  display: flex;
  align-items: center;
  gap: 5px;
`;
const StatusEnd = styled.div`
  padding-left: 9px;
`;
const Chip = styled.span<{ $none?: boolean }>`
  width: 26px;
  height: 26px;
  border: 1px solid ${(p) => (p.$none ? EDGE : "#7a78ff")};
  background: ${(p) =>
    p.$none ? "linear-gradient(to bottom right, #fff 47%, #c3141c 48%, #c3141c 53%, #fff 54%)" : "#00f"};
`;
const TaskBar = styled.footer`
  flex: none;
  height: 50px;
  display: flex;
  background: linear-gradient(90deg, #cbdccd 0, #d3dfd8 4%, #dbe1ea 23%, #ecdfec 31%, #eedfe9 34%, #d9d7da 38%, #d6d5da 58%, #d3d7e3 65%, #d9d8e2 79%, #d6d8da 90%, #dde3d8 100%);
`;
const Start = styled.button`
  width: 60px;
  display: grid;
  place-items: center;
`;
const SearchBox = styled.label`
  width: 357px;
  display: flex;
  align-items: center;
  gap: 11px;
  padding-left: 14px;
  background: #fff;
  border: 1px solid #c9c9cc;
  border-left: 0;
`;
const SearchInput = styled(Entry)`
  padding-top: 0;
  font-size: 18px;
  &::placeholder {
    color: #333;
    opacity: 1;
  }
`;
const Apps = styled.div`
  display: flex;
  padding-left: 1px;
  & > :nth-child(n + 10) {
    width: 52px;
    margin: 0 5px;
  }
`;
const AppButton = styled.button<{ $on?: boolean; $run?: boolean }>`
  width: 62px;
  display: grid;
  place-items: center;
  background: ${(p) => (p.$on ? "#f1eff3" : "none")};
  box-shadow: ${(p) => (p.$on || p.$run ? "inset 0 -3px #1274d0" : "none")};
`;
const IdTile = styled.span`
  width: 28px;
  height: 28px;
  display: grid;
  place-items: center;
  border: 2px solid #c0357f;
  background: #45183a;
  color: #e8459c;
  font-weight: 700;
  font-size: 14px;
`;
const Tray = styled.div`
  margin-left: auto;
  display: flex;
  align-items: center;
  padding-right: 30px;
  gap: 10px;
`;
const Lang = styled.span`
  width: 34px;
  margin-left: 7px;
  font-size: 14px;
  text-align: center;
`;
const Clock = styled.time`
  width: 64px;
  margin-right: 12px;
  text-align: center;
  white-space: pre;
  font-size: 14px;
  line-height: 23px;
`;

/* ---------- data ---------- */

const menus: [string, string, string][] = [
  ["", "F", "ile"], ["", "E", "dit"], ["", "V", "iew"], ["", "L", "ayout"], ["Ob", "j", "ect"], ["Effe", "c", "ts"],
  ["", "B", "itmaps"], ["Te", "x", "t"], ["", "T", "able"], ["T", "o", "ols"], ["", "W", "indow"], ["", "H", "elp"],
];
const tools = [
  "pick", "shape", "|", "crop", "zoom", "|", "freehand", "brush", "rect", "ellipse", "polygon", "|", "text", "|",
  "dimension", "connector", "|", "shadow", "checker", "|", "dropper", "fill", "|", "swirl", "|", "plus",
];
const noFly = ["checker", "swirl", "plus"];
const docColors =
  "none,#0000c4,#f00,#0ff,#0f0f78,#1e1edc,#0000a0,#6060c0,#4f4fe8,#1212e6,#0a0a66,#9898b0,#6060c4,#c86096,#006496,#000096,#000,#ff0,#fff,#50ffff,#5078ff,#4f7860,#50b864,#64b864,#30b864,#38c864,#38c80c,#3cd820,#e0003c,#e02030,#0f9848,#ff6838,#00c8ff,#00f".split(",");
const sideColors =
  "none,#000,#1a1a1a,#333,#4d4d4d,#666,#808080,#999,#b3b3b3,#ccc,#e6e6e6,#fff,#00f,#0ff,#0f0,#ff0,#f00,#f0f,#90c,#f60,#f9c,#633,#ccf,#99f,#69f,#66f,#66c,#039,#006,#369,#0cf,#9ff,#9cc,#699,#366".split(",");

const MM_X = 6.375;
const MM_Y = 6.4;
const ZERO_X = 210;
const Y130 = 29;

const TopRuler = () => (
  <RulerSvg>
    {Array.from({ length: 225 }, (_, i) => i - 29).map((m) => {
      const x = Math.round(ZERO_X + m * MM_X) + 0.5;
      const len = m % 10 === 0 ? 5 : m % 5 === 0 ? 2 : 1;
      return <path key={m} d={`M${x} ${15}v-${len}`} stroke="#8a888c" />;
    })}
    {Array.from({ length: 21 }, (_, i) => i - 2).map((n) => (
      <text key={n} x={ZERO_X + n * 10 * MM_X} y="9" textAnchor="middle">{Math.abs(n * 10)}</text>
    ))}
    <text x="1454" y="9" textAnchor="end">millimeters</text>
    <path d="M1249.500 0v17" stroke="#777" strokeDasharray="3 2" />
    <path d="M4 7h10M8 4v12M8 7l6 7" stroke="#777" strokeDasharray="2 1" fill="none" />
  </RulerSvg>
);
const LeftRuler = () => (
  <RulerSvg>
    {Array.from({ length: 118 }, (_, i) => 133 - i).map((m) => {
      const y = Math.round(Y130 + (130 - m) * MM_Y) + 0.5;
      const len = m % 10 === 0 ? 5 : m % 5 === 0 ? 2 : 1;
      return <path key={m} d={`M15 ${y}h-${len}`} stroke="#8a888c" />;
    })}
    {[130, 120, 110, 100, 90, 80, 70, 60, 50, 40, 30].map((n) => (
      <text key={n} transform={`translate(9 ${Y130 + (130 - n) * MM_Y}) rotate(-90)`} textAnchor="middle">{n}</text>
    ))}
    <text transform="translate(9 747) rotate(-90)">millimeters</text>
    <path d="M0 91.500h17" stroke="#777" strokeDasharray="3 2" />
  </RulerSvg>
);

const ArtworkView = () => (
  <Artwork>
    <path d="M191.500 0v730" stroke="#c4c2c5" />
    <g strokeWidth="18" strokeLinecap="round">
      <path d="M392 315.500H1260" stroke="#f00" />
      <path d="M392 315.500 1230 89" stroke="#00f" />
    </g>
    <circle cx="1230.500" cy="89" r="8.500" fill="#00f" stroke="#ffdc14" strokeWidth="5" />
    <path d="M1206.500 134.500v14l3.500-3 3 6 2.500-1-2.500-6h5z" fill="#fff" stroke="#222" />
    <rect x="1208.500" y="150.500" width="11" height="7" fill="#fff" stroke="#222" strokeDasharray="1.500 .7" />
  </Artwork>
);

const Btn = ({ n, label, state, fly, s }: { n: string; label?: string; state?: "on" | "hot"; fly?: boolean; s?: number }) => (
  <ToolButton aria-label={label ?? n} $state={state} $fly={fly}>
    <Svg n={n} s={s} />
  </ToolButton>
);

const MoreDots = ({ label, fly }: { label: string; fly?: boolean }) => (
  <Dots aria-label={label} $fly={fly}><i /><i /><i /></Dots>
);

const OriginGrid = () => (
  <svg width="30" height="31" viewBox="0 0 30 31" aria-hidden="true">
    <path d="M3 4h24v23H3z" fill="none" stroke="#000" strokeWidth="1.500" />
    {[0, 12, 24].map((x) =>
      [0, 12, 24].map((y) => (
        <rect key={`${x}-${y}`} x={x + 0.5} y={y + 0.5} width="5" height="6" fill={x === 12 && y === 12 ? "#000" : "#fff"} stroke="#000" strokeWidth="1.500" />
      ))
    )}
  </svg>
);

const DegreeMark = () => (
  <svg width="21" height="28" aria-hidden="true">
    <circle cx="15" cy="9" r="5" fill="none" stroke={INK} strokeWidth="1.400" />
  </svg>
);

const OutlineScale = () => (
  <svg width="292" height="32" aria-hidden="true">
    <path d="M1 16h289" stroke="#b3b1b4" strokeWidth="4" />
    <path d="M1 0v32M73.500 0v32M145.500 0v32M218 0v32M290 0v32" stroke="#b3b1b4" strokeWidth="2" />
  </svg>
);

export default function App() {
  return (
    <Window>
      <Global />
      <TitleBar>
        <Svg n="corel" w={20} h={20} />
        <Title>CorelDRAW - Untitled-۱*</Title>
        <Caption>
          {[["user", "Account", 17], ["min", "Minimize", 14], ["restore", "Restore", 15], ["x", "Close", 15]].map(([n, l, s]) => (
            <CaptionButton key={n} aria-label={l as string}><Svg n={n as string} s={s as number} /></CaptionButton>
          ))}
        </Caption>
      </TitleBar>

      <MenuBar>
        {menus.map(([a, b, c]) => (
          <button key={a + b + c}>{a}<U>{b}</U>{c}</button>
        ))}
      </MenuBar>

      <Toolbar>
        <Btn n="newDoc" label="New" />
        <Split><Btn n="open" label="Open" /><DropArrow aria-label="Recent files" /></Split>
        <Btn n="save" label="Save" />
        <Btn n="cloudDown" label="Download" state="hot" />
        <Btn n="cloudUp" label="Upload" state="hot" />
        <Btn n="print" label="Print" />
        <Divider />
        <Btn n="cut" label="Cut" />
        <Btn n="copy" label="Copy" />
        <Btn n="paste" label="Paste" />
        <Divider />
        <Split><Btn n="undo" label="Undo" /><DropArrow aria-label="Undo list" /></Split>
        <Split><Btn n="redo" label="Redo" /><DropArrow $off aria-label="Redo list" /></Split>
        <Divider />
        <Btn n="importDoc" label="Import" />
        <Btn n="exportDoc" label="Export" />
        <ToolButton><PdfIcon>PDF<Svg n="pdf" w={10} h={10} /></PdfIcon></ToolButton>
        <Divider />
        <Field $w={106}><Entry aria-label="Zoom level" defaultValue="۱۷۰٪" /><DropArrow $box $w={22} aria-label="Zoom levels" /></Field>
        <Btn n="full" label="Full screen" />
        <Divider />
        <Btn n="rulers" label="Show rulers" state="on" />
        <Btn n="grid" label="Show grid" />
        <Btn n="guides" label="Show guidelines" state="on" />
        <Divider />
        <Btn n="snapOff" label="Snap off" />
        <Split><Words $w={66}>Snap <U>T</U>o</Words><DropArrow $w={18} aria-label="Snap options" /></Split>
        <Divider />
        <Btn n="gear" label="Options" fly />
        <Divider />
        <Btn n="launch" label="Applications" />
        <Split><Words $w={44}>Launch</Words><DropArrow $w={44} aria-label="Launch options" /></Split>
      </Toolbar>

      <PropertyBar>
        <Group $gap={0}>
          <OriginGrid />
          <Stack $w={23} $end><label htmlFor="px">X:</label><label htmlFor="py">Y:</label></Stack>
          <StackField $w={110}><Entry id="px" defaultValue="۹۷,۰۴۶ mm" /><Entry id="py" defaultValue="۱۰۲,۸۲۷ mm" /></StackField>
        </Group>
        <Group $gap={0}>
          <Stack $w={18}><Svg n="widthIcon" s={15} /><Svg n="heightIcon" s={15} /></Stack>
          <StackField $w={109}><Entry aria-label="Width" defaultValue="۱۳۱,۳۸۵ mm" /><Entry aria-label="Height" defaultValue="۳۵,۲۰۴ mm" /></StackField>
          <Stack $w={6} />
          <StackField $w={53}><Entry aria-label="Scale X" defaultValue="۱۰۰,۰" /><Entry aria-label="Scale Y" defaultValue="۱۰۰,۰" /></StackField>
          <Stack $w={16} $end><span>%</span><span>%</span></Stack>
          <LockButton aria-label="Lock ratio"><Svg n="lock" w={16} h={18} /></LockButton>
        </Group>
        <Group $pad={9} $gap={2}>
          <Svg n="rotate" />
          <Field $w={62}><Entry aria-label="Angle" defaultValue="۱۵,۰" /></Field>
          <DegreeMark />
        </Group>
        <Group $pad={9}><Btn n="mirrorH" label="Mirror horizontally" /><Btn n="mirrorV" label="Mirror vertically" /></Group>
        <Group>
          <Svg n="nib" />
          <Field $w={100}><Mark>۸,۰ pt</Mark><Push /><DropArrow $box $w={22} aria-label="Outline widths" /></Field>
          <Field $w={124}><LineSample aria-label="Line style" /><DropArrow $box $w={22} aria-label="Line styles" /></Field>
          <Btn n="swirl" label="Variable outline" />
        </Group>
        <Group>
          <Field $w={62}><LineSample $at="end" aria-label="Start arrowhead" /><DropArrow $box $w={22} aria-label="Start arrowheads" /></Field>
          <Field $w={62}><LineSample $at="start" aria-label="End arrowhead" /><DropArrow $box $w={22} aria-label="End arrowheads" /></Field>
        </Group>
        <Group $gap={3}>
          <Svg n="smooth" w={22} h={20} />
          <Field $w={65}><Entry aria-label="Smoothing" defaultValue="۵۰" /><SliderButton aria-label="Smoothing slider"><Svg n="slider" /></SliderButton></Field>
        </Group>
        <Group><Btn n="close" label="Close curve" /></Group>
        <Group><Btn n="order" label="Order" /></Group>
        <Group $pad={9}><Btn n="bound" label="Edit bounds" /><Btn n="boundOff" label="Apply bounds" /></Group>
        <Group><Btn n="wrap" label="Wrap text" /></Group>
        <Group><Btn n="burst" label="Explode" /></Group>
        <Group><Btn n="align" label="Align nodes" /></Group>
        <AddCell><Btn n="plus" label="Customize" s={18} /></AddCell>
      </PropertyBar>

      <Body>
        <ToolBox>
          {tools.map((t, i) =>
            t === "|" ? <ToolRule key={i} /> : <Btn key={i} n={t} fly={!noFly.includes(t)} state={t === "pick" ? "on" : undefined} s={t === "plus" ? 18 : 20} />
          )}
        </ToolBox>

        <Center>
          <Tabs>
            <Tab $w={154}><Svg n="home" w={17} h={16} />Welcome Screen</Tab>
            <Tab $w={118} $on>Untitled-۱*</Tab>
            <AddTab aria-label="New tab"><Svg n="plus" s={18} /></AddTab>
          </Tabs>
          <RulerRow><TopRuler /></RulerRow>
          <Stage>
            <SideRuler><LeftRuler /></SideRuler>
            <Canvas><ArtworkView /></Canvas>
            <ScrollY>
              <ScrollEnd aria-label="Scroll up"><Svg n="chevUp" s={16} /></ScrollEnd>
              <Thumb $before={290} $size={185} $after={216}><i /></Thumb>
              <ScrollEnd aria-label="Scroll down"><Svg n="chevDown" s={16} /></ScrollEnd>
            </ScrollY>
            <ScrollX>
              <ScrollEnd aria-label="Scroll left"><Svg n="chevLeft" s={16} /></ScrollEnd>
              <Thumb $before={286} $size={690} $after={403}><i /></Thumb>
              <ScrollEnd aria-label="Scroll right"><Svg n="chevRight" s={16} /></ScrollEnd>
            </ScrollX>
            <ScrollEnd aria-label="Navigator"><Svg n="zoomPan" s={15} /></ScrollEnd>
          </Stage>
          <PageBar>
            <NavButton aria-label="Add page"><Svg n="plusSmall" s={18} /></NavButton>
            <NavButton aria-label="First page"><Svg n="first" s={14} /></NavButton>
            <NavButton aria-label="Previous page"><Svg n="prev" s={13} /></NavButton>
            <PageCount><span>1</span><span>of</span><span>1</span></PageCount>
            <NavButton aria-label="Next page"><Svg n="next" s={13} /></NavButton>
            <NavButton aria-label="Last page"><Svg n="last" s={14} /></NavButton>
            <NavButton aria-label="Add page after"><Svg n="plusSmall" s={18} /></NavButton>
            <PageTab>Page 1</PageTab>
          </PageBar>
          <DocPalette>
            <Grip $w={7} $h={20} />
            <Slot $w={24} aria-label="Palette menu"><Svg n="tri" s={12} /></Slot>
            <Slot $w={24} aria-label="Pick colour"><Svg n="dropper" s={17} /></Slot>
            <Slot $w={21} aria-label="Scroll palette left"><Svg n="chevLeftG" s={13} /></Slot>
            <Swatches>
              {docColors.map((c, i) => <Swatch key={i} $c={c} $dot={i === 27 || i === 28} aria-label={c} />)}
            </Swatches>
            <Slot $w={20} aria-label="Scroll palette right"><Svg n="chevRightG" s={13} /></Slot>
            <Slot $w={24} aria-label="Expand palette"><Svg n="dblChev" s={15} /></Slot>
          </DocPalette>
        </Center>

        <Docker>
          <DockHead>
            <DockTitle>Properties</DockTitle>
            <Slot $w={20} aria-label="Collapse docker"><Svg n="dbl" s={14} /></Slot>
          </DockHead>
          <DockTools>
            <Btn n="nib" label="Outline" state="on" />
            <Btn n="fillOrange" label="Fill" />
            <Btn n="checker" label="Transparency" />
            <ToolButton aria-label="Effects"><Fx>fx</Fx></ToolButton>
            <Btn n="wave" label="Curve" />
            <Btn n="brush" label="Brush" />
            <Btn n="picture" label="Bitmap" />
            <Push />
            <Btn n="tabTop" label="Tabbed view" state="on" />
            <Btn n="tabEye" label="Show properties" state="on" />
          </DockTools>
          <DockMain>
            <DockBody>
              <Section $light>
                <Line $h={29}><H3 $b>Outline</H3><Lock aria-label="Outline lock" /></Line>
                <Line>
                  <Field $w={99}><ColorWell aria-label="Outline colour" /><DropArrow $box $w={22} aria-label="Colours" /></Field>
                  <Lock aria-label="Colour lock" />
                </Line>
                <Line>
                  <Field $w={99}><Entry aria-label="Outline width" defaultValue="۸,۰ pt" /><DropArrow $box $w={22} aria-label="Widths" /></Field>
                  <Field $w={125}><UnitSelect aria-label="Units" defaultValue="points"><option>points</option></UnitSelect><UnitArrow /></Field>
                  <Lock aria-label="Width lock" />
                </Line>
                <Line>
                  <Field $w={229}><LineSample aria-label="Line style" /><DropArrow $box $w={22} aria-label="Styles" /></Field>
                  <MoreDots label="Line style settings" />
                  <Lock aria-label="Style lock" />
                </Line>
                <Line>
                  <Btn n="dash1" label="Default dashes" /><Btn n="dash2" label="Align dashes" /><Btn n="dash3" label="Fixed dashes" />
                  <Lock aria-label="Dash lock" />
                </Line>
                <Line $h={14} />
              </Section>
              <Section>
                <Collapse aria-label="Collapse section" />
                <Line $h={39}>
                  <RowLabel $w={76} htmlFor="miter">Miter limit:</RowLabel>
                  <Field $w={99}><Entry id="miter" defaultValue="۵,۰" /><Spinner /></Field>
                  <Lock aria-label="Miter lock" />
                </Line>
                <Line $h={27}>
                  <RowLabel as="span" $w={76}>Corners:</RowLabel>
                  <Btn n="miter" state="on" /><Btn n="round" /><Btn n="bevel" />
                  <Lock aria-label="Corner lock" />
                </Line>
                <Line $h={39}>
                  <RowLabel as="span" $w={76}>Line caps:</RowLabel>
                  <Btn n="cap0" /><Btn n="cap1" state="on" /><Btn n="cap2" />
                  <Lock aria-label="Cap lock" />
                </Line>
                <Line $h={27}>
                  <RowLabel as="span" $w={76}>Position:</RowLabel>
                  <Btn n="pos0" /><Btn n="pos1" state="on" /><Btn n="pos2" />
                  <Lock aria-label="Position lock" />
                </Line>
                <Line $h={15} />
                <Rule />
                <Line $h={50}><H3>Arrowheads</H3></Line>
                <Line $h={22}>
                  <Svg n="arrowL" w={18} h={18} />
                  <Field $w={75}><LineSample $at="end" aria-label="Start arrow" /><DropArrow $box $w={22} aria-label="Start arrows" /></Field>
                  <MoreDots fly label="Start arrow settings" />
                  <Lock aria-label="Start lock" />
                </Line>
                <Line $h={42}>
                  <Svg n="arrowR" w={18} h={18} />
                  <Field $w={75}><LineSample $at="start" aria-label="End arrow" /><DropArrow $box $w={22} aria-label="End arrows" /></Field>
                  <MoreDots fly label="End arrow settings" />
                  <Lock aria-label="End lock" />
                </Line>
                <Line $h={15}>
                  <Indent><CheckLabel><Tick /><span>S<U>h</U>are Attributes</span></CheckLabel></Indent>
                  <Lock aria-label="Share lock" />
                </Line>
                <Line $h={15} />
                <Rule />
                <Line $h={59}><H3>Variable Outline</H3><Btn n="swirl" label="Edit variable outline" /></Line>
                <Line $h={27}><Inset><OutlineScale /></Inset><Lock aria-label="Variable lock" /></Line>
                <Line $h={15} />
                <Line>
                  <RowLabel $w={63} $off htmlFor="vp">Position:</RowLabel>
                  <Field $w={62} $off><Entry id="vp" disabled defaultValue="۰,۰ %" /></Field>
                </Line>
                <SideGrid>
                  <div>
                    {["Side ۱:", "Side ۲:"].map((t) => (
                      <Line key={t}>
                        <RowLabel $w={63} $off htmlFor={t}>{t}</RowLabel>
                        <Field $w={100} $off><Entry id={t} disabled defaultValue="۰,۰ pt" /><Spinner off /></Field>
                      </Line>
                    ))}
                  </div>
                  <Svg n="unlock" s={17} />
                </SideGrid>
                <Line>
                  <RowLabel $w={63} $off htmlFor="vt">Total:</RowLabel>
                  <Field $w={100} $off><Entry id="vt" disabled defaultValue="۰,۰ pt" /><Spinner off /></Field>
                </Line>
                <Line $h={40}><CheckLabel $off><Tick disabled />Scale width with Stroke</CheckLabel></Line>
                <Line $h={4} />
                <Rule />
                <Line $h={57}><H3>Calligraphy</H3><Btn n="undoSmall" s={14} label="Reset calligraphy" /></Line>
              </Section>
            </DockBody>
            <DockScroll>
              <ScrollEnd aria-label="Scroll properties up"><Svg n="chevUp" s={18} /></ScrollEnd>
              <Thumb $before={0} $size={616} $after={134}><i /></Thumb>
              <ScrollEnd aria-label="Scroll properties down"><Svg n="chevDown" s={18} /></ScrollEnd>
            </DockScroll>
          </DockMain>
        </Docker>

        <DockSide>
          <DockClose aria-label="Close docker"><Svg n="xGray" s={16} /></DockClose>
          <DockTabs>
            <DockTab $h={91}><Svg n="learn" s={14} /><span>Learn</span></DockTab>
            <DockTab $h={105}><Svg n="layers" s={15} /><span>Objects</span></DockTab>
            <DockTab $h={119} $on><Svg n="props" s={16} /><span>Properties</span></DockTab>
            <Slot $w={24} $h={30} aria-label="Add docker"><Svg n="plus" s={18} /></Slot>
          </DockTabs>
        </DockSide>

        <SidePalette>
          <Grip $w={20} $h={6} />
          <Slot $w={22} aria-label="Palette options"><Svg n="tri" s={12} /></Slot>
          <Slot $w={22} $h={26} aria-label="Sample colour"><Svg n="dropperOff" s={16} /></Slot>
          <Slot $w={22} $h={20} aria-label="Scroll palette up"><Svg n="chevUpG" s={14} /></Slot>
          <SideSwatches>
            {sideColors.map((c, i) => <Swatch key={i} $c={c} $on={i === 12} aria-label={c} />)}
          </SideSwatches>
          <Slot $w={22} $h={22} aria-label="Scroll palette down"><Svg n="chevDownG" s={14} /></Slot>
          <Slot $w={22} $h={28} aria-label="Expand side palette"><Svg n="dblChev" s={15} /></Slot>
        </SidePalette>
      </Body>

      <Status>
        <StatusCell $w={900}>
          <Btn n="gear" label="Status options" fly />
          Click an object twice for rotating/skewing; dbl-clicking tool selects all objects; Shift+click multi-selects; Alt+click digs; Ctrl+click selects in a group
        </StatusCell>
        <StatusCell $w={411}>Curve on Layer ۱</StatusCell>
        <StatusCell $w={250}><Svg n="fill" /><Chip $none />None</StatusCell>
        <StatusCell $w={290}><Svg n="nib" /><Chip />R:۰ G:۰ B:۲۵۵ (#۰۰۰۰FF)  ۸,۰۰۰ pt</StatusCell>
        <Push />
        <Divider />
        <StatusEnd><Svg n="monitor" /></StatusEnd>
      </Status>

      <TaskBar>
        <Start aria-label="Start"><Svg n="windows" /></Start>
        <SearchBox><Svg n="search" /><SearchInput aria-label="Search" placeholder="Type here to search" /></SearchBox>
        <Apps>
          {[["task", 20], ["copilot", 30], ["chrome", 30], ["shield", 28], ["folder", 28], ["dropbox", 30], ["corel", 30]].map(([n, s]) => (
            <AppButton key={n} aria-label={n as string}><Svg n={n as string} s={s as number} /></AppButton>
          ))}
          <AppButton aria-label="InDesign"><IdTile>Id</IdTile></AppButton>
          <AppButton $on aria-label="CorelDRAW"><Svg n="corel" s={30} /></AppButton>
          <AppButton $run aria-label="Camtasia"><Svg n="camGreen" s={30} /></AppButton>
          <AppButton $run aria-label="Recorder"><Svg n="camRed" s={30} /></AppButton>
        </Apps>
        <Tray>
          {[["caret", 17], ["cam", 20], ["cloudInfo", 20], ["mic", 20], ["battery", 20], ["sound", 21], ["wifi", 18], ["pen", 21]].map(([n, s]) => (
            <Slot key={n} $w={20} aria-label={n as string}><Svg n={n as string} s={s as number} /></Slot>
          ))}
          <Lang>ENG</Lang>
          <Clock>{"۷:۴۶ PM\n۷/۱۸/۲۰۲۵"}</Clock>
          <Slot $w={22} aria-label="Notifications"><Svg n="note" s={22} /></Slot>
        </Tray>
      </TaskBar>
    </Window>
  );
}
